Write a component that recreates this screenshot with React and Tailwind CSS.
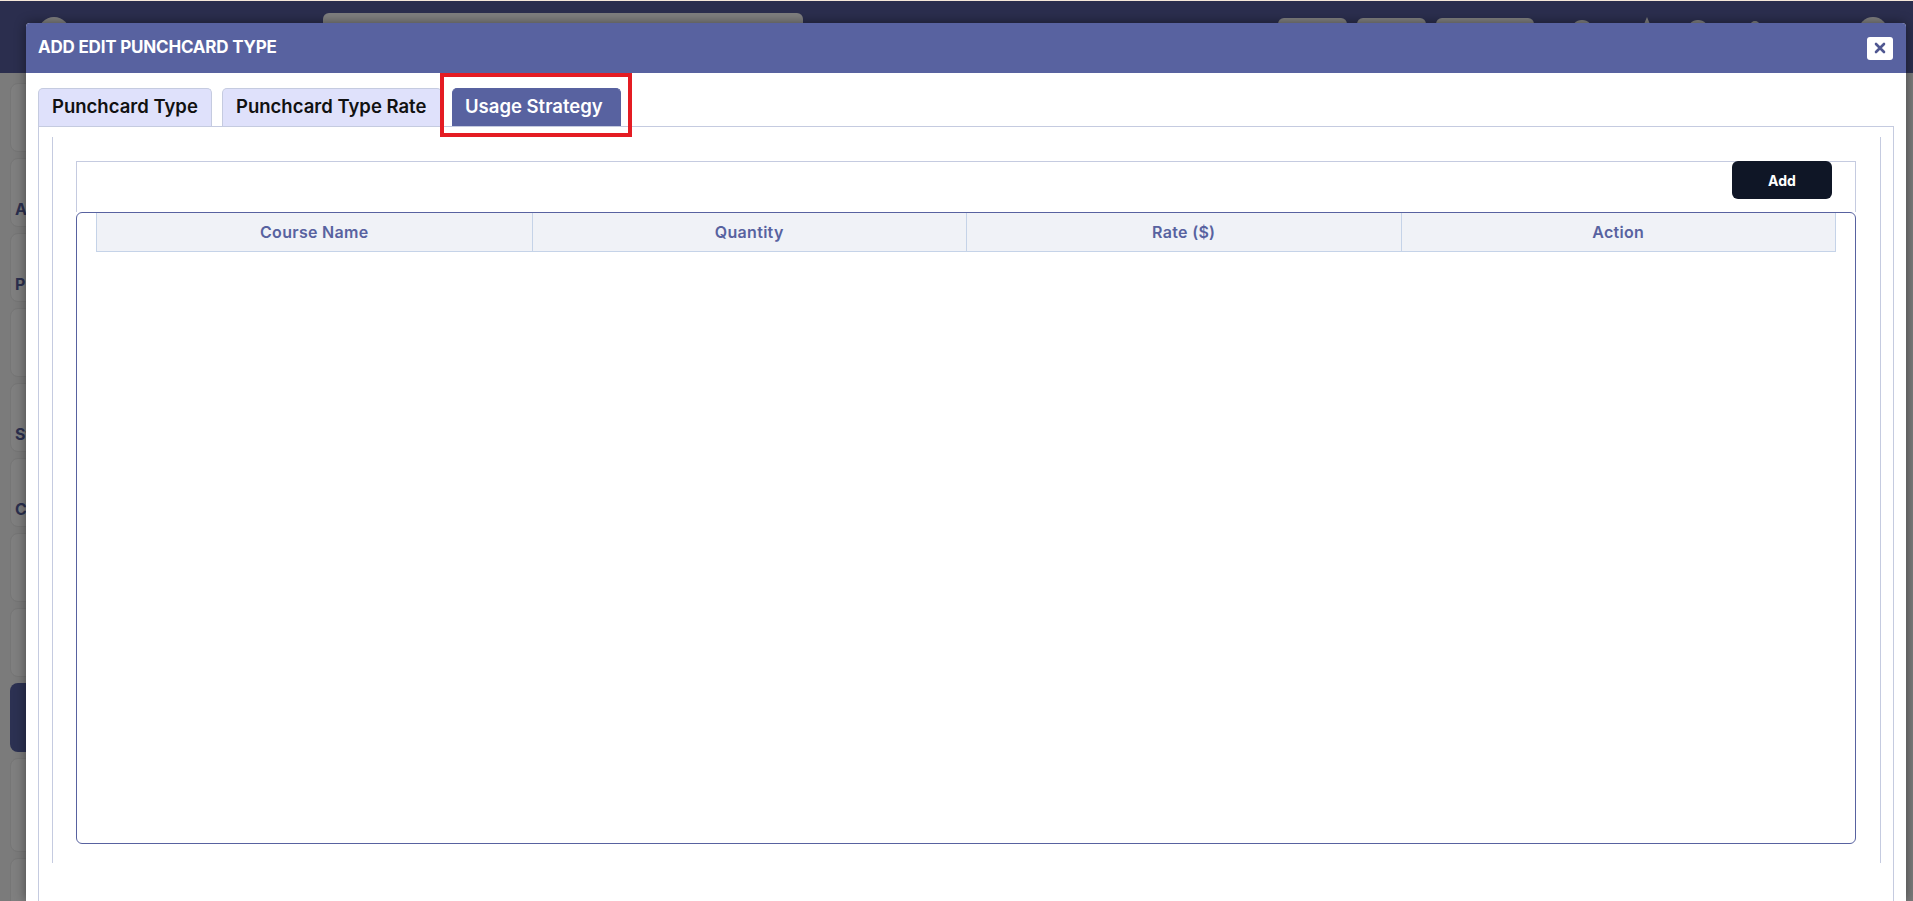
import React from "react";

const cards = [
  { h: 69, letter: "" },
  { h: 69, letter: "A" },
  { h: 69, letter: "P" },
  { h: 69, letter: "" },
  { h: 69, letter: "St" },
  { h: 69, letter: "C" },
  { h: 69, letter: "" },
  { h: 69, letter: "" },
  { h: 69, letter: "", dark: true },
  { h: 94, letter: "" },
  { h: 60, letter: "" },
];

function Tab({ label, width, active }) {
  if (active) {
    return (
      <div className="relative">
        <div
          className="flex h-[38px] items-center rounded-t-[5px] border-x border-t border-[#5862a0] bg-[#5862a0] pb-[2px] pl-[12px] text-[18.5px] font-semibold text-white"
          style={{ width }}
        >
          {label}
        </div>
        <span className="pointer-events-none absolute -left-[12px] -top-[15px] -right-[11px] -bottom-[11px] border-[4px] border-[#e41c23]" />
      </div>
    );
  }
  return (
    <div
      className="flex h-[38px] items-center rounded-t-[5px] border-x border-t border-[#c5cbe0] bg-[#dfe1fb] pb-[2px] pl-[13px] text-[18.5px] font-semibold text-[#111111]"
      style={{ width }}
    >
      {label}
    </div>
  );
}

export default function App() {
  return (
    <div className="relative h-[901px] w-[1913px] overflow-hidden bg-[#7b7b7b] [font-family:Inter,'Noto_Sans',sans-serif]">
      <div className="h-px bg-[#f6e9da]" />
      <div className="flex h-[72px] items-start bg-[#2b2e4e]">
        <div className="ml-[38px] mt-[16px] h-[32px] w-[32px] rounded-full bg-[#7f7f7f]" />
        <div className="ml-[253px] mt-[12px] h-[34px] w-[480px] rounded-[6px] bg-[#7f7f7f]" />
        <div className="ml-[475px] mt-[17px] h-[30px] w-[69px] rounded-[6px] bg-[#7f7f7f]" />
        <div className="ml-[10px] mt-[17px] h-[30px] w-[69px] rounded-[6px] bg-[#7f7f7f]" />
        <div className="ml-[10px] mt-[17px] h-[30px] w-[98px] rounded-[6px] bg-[#7f7f7f]" />
        <div className="ml-[37px] mt-[19px] h-[22px] w-[22px] rounded-full bg-[#7f7f7f]" />
        <svg className="ml-[44px] mt-[15px]" width="20" height="20" viewBox="0 0 20 20">
          <path d="M10 1 L12.6 7.2 L19 7.6 L14 11.8 L15.6 18.4 L10 14.8 L4.4 18.4 L6 11.8 L1 7.6 L7.4 7.2 Z" fill="#7f7f7f" />
        </svg>
        <div className="ml-[30px] mt-[19px] h-[22px] w-[22px] rounded-full bg-[#7f7f7f]" />
        <div className="ml-[41px] mt-[20px] h-[20px] w-[10px] rounded-t-full bg-[#7f7f7f]" />
        <div className="ml-[98px] mt-[16px] h-[30px] w-[30px] rounded-full bg-[#7f7f7f]" />
      </div>

      <div className="flex flex-col gap-[6px] pl-[10px] pt-[10px]">
        {cards.map((c, i) => (
          <div
            key={i}
            className={
              c.dark
                ? "w-[80px] rounded-[8px] bg-[#2c3152]"
                : "w-[80px] rounded-[8px] border border-[#767676] bg-[#7f7f7f] pl-[4px] pt-[40px] text-[16px] font-bold leading-[20px] text-[#2b2f4e]"
            }
            style={{ height: c.h }}
          >
            {c.letter}
          </div>
        ))}
      </div>

      <div className="absolute bottom-0 left-[26px] top-[23px] w-[1880px] rounded-t-[4px] bg-white shadow-[0_0_12px_rgba(0,0,0,0.45)]">
        <div className="flex h-[50px] items-center justify-between rounded-t-[4px] bg-[#5862a0] pl-[12px] pr-[13px]">
          <h2 className="text-[17px] font-bold tracking-[-0.2px] text-white">ADD EDIT PUNCHCARD TYPE</h2>
          <button className="flex h-[23px] w-[26px] items-center justify-center rounded-[3px] bg-white">
            <svg width="12" height="12" viewBox="0 0 12 12">
              <path d="M2 2L10 10M10 2L2 10" stroke="#4f5791" strokeWidth="2.6" strokeLinecap="round" />
            </svg>
          </button>
        </div>

        <div className="px-[12px] pt-[15px]">
          <div className="flex items-end gap-[10px]">
            <Tab label="Punchcard Type" width={174} />
            <Tab label="Punchcard Type Rate" width={220} />
            <Tab label="Usage Strategy" width={169} active />
          </div>

          <div className="h-[800px] border-x border-t border-[#c5cbe0] pl-[13px] pr-[12px] pt-[10px]">
            <div className="h-[726px] border-x border-[#c5cbe0] pl-[23px] pr-[24px] pt-[24px]">
              <div className="flex h-[51px] justify-end border-x border-t border-[#c5cbe0] pr-[23px]">
                <button className="-mt-px h-[38px] w-[100px] rounded-[6px] bg-[#0f1626] text-[14px] font-bold text-white">
                  Add
                </button>
              </div>
              <div className="h-[632px] rounded-[6px] border border-[#5862a0] px-[19px]">
                <div className="grid h-[39px] grid-cols-4 border-x border-b border-[#c5d3e8] bg-[#f0f2f7] text-[16px] font-semibold tracking-[0.3px] text-[#5862a0]">
                  <div className="flex items-center justify-center">Course Name</div>
                  <div className="flex items-center justify-center border-l border-[#c5d3e8]">Quantity</div>
                  <div className="flex items-center justify-center border-l border-[#c5d3e8]">Rate ($)</div>
                  <div className="flex items-center justify-center border-l border-[#c5d3e8]">Action</div>
                </div>
              </div>
            </div>
          </div>
        </div>
      </div>
    </div>
  );
}
